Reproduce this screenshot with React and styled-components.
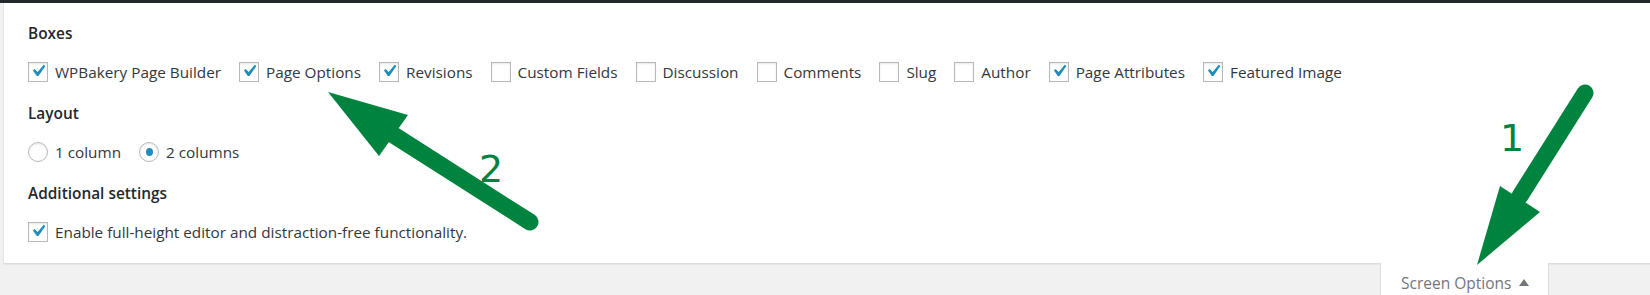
import React from "react";
import styled, { createGlobalStyle } from "styled-components";

const GlobalStyle = createGlobalStyle`
  body {
    margin: 0;
    background: #f1f1f1;
    font-family: "Open Sans", "Noto Sans", sans-serif;
    color: #32373c;
  }
`;

const boxes = [
  { label: "WPBakery Page Builder", checked: true },
  { label: "Page Options", checked: true },
  { label: "Revisions", checked: true },
  { label: "Custom Fields", checked: false },
  { label: "Discussion", checked: false },
  { label: "Comments", checked: false },
  { label: "Slug", checked: false },
  { label: "Author", checked: false },
  { label: "Page Attributes", checked: true },
  { label: "Featured Image", checked: true },
];

const Check = ({ checked }) => (
  <CheckBox>
    {checked && (
      <svg viewBox="0 0 20 20" width="24" height="24">
        <path
          fill="#1e8cbe"
          d="M14.83 4.89l1.34.94-5.81 8.38H9.02L5.78 9.67l1.34-1.25 2.57 2.4z"
        />
      </svg>
    )}
  </CheckBox>
);

const App = () => {
  return (
    <Page>
      <GlobalStyle />
      <TopBar />
      <Panel>
        <Heading>Boxes</Heading>
        <Row>
          {boxes.map((box) => (
            <Item key={box.label}>
              <Check checked={box.checked} />
              <span>{box.label}</span>
            </Item>
          ))}
        </Row>
        <Heading>Layout</Heading>
        <Row>
          <Item>
            <Radio />
            <span>1 column</span>
          </Item>
          <Item>
            <Radio checked />
            <span>2 columns</span>
          </Item>
        </Row>
        <Heading>Additional settings</Heading>
        <Row>
          <Item>
            <Check checked />
            <span>Enable full-height editor and distraction-free functionality.</span>
          </Item>
        </Row>
      </Panel>
      <TabBar>
        <Tab>
          Screen Options <Caret />
        </Tab>
      </TabBar>

      <Overlay viewBox="0 0 1650 295" width="1650" height="295">
        <g fill="#00833f" stroke="#00833f">
          <line x1="530" y1="222" x2="392" y2="134" strokeWidth="17" strokeLinecap="round" />
          <polygon points="328,92 408,115 379,156" stroke="none" />
          <line x1="1585" y1="93" x2="1520" y2="196" strokeWidth="17" strokeLinecap="round" />
          <polygon points="1477,265 1500,186 1540,212" stroke="none" />
        </g>
        <Num x="1500" y="151">1</Num>
        <Num x="479" y="182">2</Num>
      </Overlay>
    </Page>
  );
};

const Page = styled.div`
  position: relative;
  width: 1650px;
  height: 295px;
  overflow: hidden;
`;

const TopBar = styled.div`
  height: 3px;
  background: #23282d;
`;

const Panel = styled.div`
  margin-left: 3px;
  background: #fff;
  border-left: 1px solid #e5e5e5;
  border-bottom: 1px solid #dcdcdc;
  box-shadow: 0 1px 1px rgba(0, 0, 0, 0.04);
  padding: 21px 0 21px 24px;
  display: flex;
  flex-direction: column;
`;

const Heading = styled.div`
  font-size: 15.4px;
  font-weight: 600;
  line-height: 20px;
  color: #23282d;
  margin-bottom: 18px;

  & ~ & {
    margin-top: 22px;
  }
`;

const Row = styled.div`
  display: flex;
  align-items: center;
  gap: 18px;
  height: 20px;
`;

const Item = styled.label`
  display: flex;
  align-items: center;
  gap: 7px;
  font-size: 15.3px;
  line-height: 20px;
  color: #32373c;
  white-space: nowrap;
`;

const CheckBox = styled.span`
  box-sizing: border-box;
  width: 20px;
  height: 20px;
  border: 1px solid #b4b9be;
  background: #fff;
  box-shadow: inset 0 1px 2px rgba(0, 0, 0, 0.1);
  display: flex;
  align-items: center;
  justify-content: center;
  overflow: visible;

  svg {
    margin: -4px -4px -1px -4px;
  }
`;

const Radio = styled.span`
  box-sizing: border-box;
  width: 20px;
  height: 20px;
  border-radius: 50%;
  border: 1px solid #b4b9be;
  background: #fff;
  box-shadow: inset 0 1px 2px rgba(0, 0, 0, 0.1);
  display: flex;
  align-items: center;
  justify-content: center;

  &::after {
    content: "";
    display: ${(p) => (p.checked ? "block" : "none")};
    width: 7px;
    height: 8px;
    border-radius: 50%;
    background: #1e8cbe;
  }
`;

const TabBar = styled.div`
  display: flex;
  justify-content: flex-end;
  padding-right: 101px;
`;

const Tab = styled.div`
  box-sizing: border-box;
  width: 169px;
  height: 40px;
  margin-top: -1px;
  background: #fff;
  border: 1px solid #dcdcdc;
  border-top: none;
  font-size: 15.5px;
  line-height: 20px;
  padding: 10px 0 0 20px;
  color: #72777c;
  display: flex;
  align-items: flex-start;
  gap: 8px;
`;

const Caret = styled.span`
  margin-top: 6px;
  width: 0;
  height: 0;
  border-left: 5px solid transparent;
  border-right: 5px solid transparent;
  border-bottom: 7px solid #72777c;
`;

const Overlay = styled.svg`
  position: absolute;
  top: 0;
  left: 0;
  pointer-events: none;
`;

const Num = styled.text`
  font-family: "DejaVu Sans", sans-serif;
  font-size: 38px;
  fill: #00833f;
`;

export default App;
